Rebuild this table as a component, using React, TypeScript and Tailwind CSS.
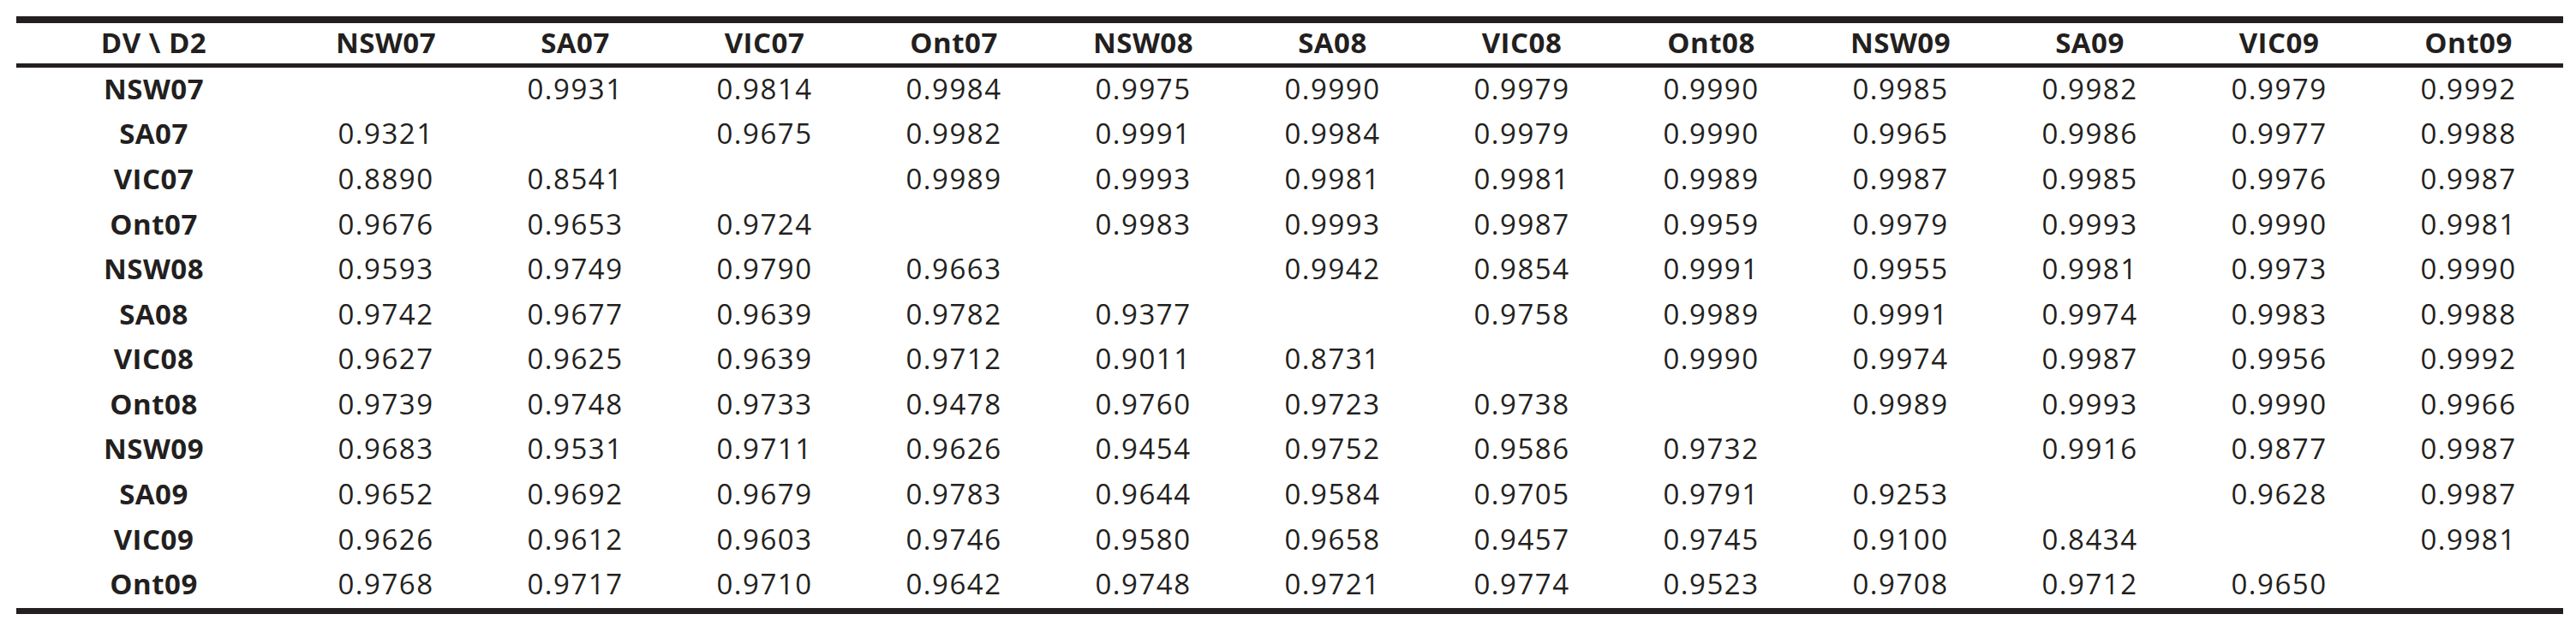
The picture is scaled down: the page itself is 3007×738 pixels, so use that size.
import React from "react";

const cols = ["NSW07","SA07","VIC07","Ont07","NSW08","SA08","VIC08","Ont08","NSW09","SA09","VIC09","Ont09"];

const data: string[][] = [
  ["", "0.9931", "0.9814", "0.9984", "0.9975", "0.9990", "0.9979", "0.9990", "0.9985", "0.9982", "0.9979", "0.9992"],
  ["0.9321", "", "0.9675", "0.9982", "0.9991", "0.9984", "0.9979", "0.9990", "0.9965", "0.9986", "0.9977", "0.9988"],
  ["0.8890", "0.8541", "", "0.9989", "0.9993", "0.9981", "0.9981", "0.9989", "0.9987", "0.9985", "0.9976", "0.9987"],
  ["0.9676", "0.9653", "0.9724", "", "0.9983", "0.9993", "0.9987", "0.9959", "0.9979", "0.9993", "0.9990", "0.9981"],
  ["0.9593", "0.9749", "0.9790", "0.9663", "", "0.9942", "0.9854", "0.9991", "0.9955", "0.9981", "0.9973", "0.9990"],
  ["0.9742", "0.9677", "0.9639", "0.9782", "0.9377", "", "0.9758", "0.9989", "0.9991", "0.9974", "0.9983", "0.9988"],
  ["0.9627", "0.9625", "0.9639", "0.9712", "0.9011", "0.8731", "", "0.9990", "0.9974", "0.9987", "0.9956", "0.9992"],
  ["0.9739", "0.9748", "0.9733", "0.9478", "0.9760", "0.9723", "0.9738", "", "0.9989", "0.9993", "0.9990", "0.9966"],
  ["0.9683", "0.9531", "0.9711", "0.9626", "0.9454", "0.9752", "0.9586", "0.9732", "", "0.9916", "0.9877", "0.9987"],
  ["0.9652", "0.9692", "0.9679", "0.9783", "0.9644", "0.9584", "0.9705", "0.9791", "0.9253", "", "0.9628", "0.9987"],
  ["0.9626", "0.9612", "0.9603", "0.9746", "0.9580", "0.9658", "0.9457", "0.9745", "0.9100", "0.8434", "", "0.9981"],
  ["0.9768", "0.9717", "0.9710", "0.9642", "0.9748", "0.9721", "0.9774", "0.9523", "0.9708", "0.9712", "0.9650", ""],
];

export default function App() {
  return (
    <div className="w-[3007px] h-[738px] bg-white pt-[19px] pl-[19px] font-['Open_Sans',sans-serif] text-[#231f20]">
      <div className="w-[2973px]">
        <div className="h-[8px] bg-[#231f20]" />
        <div className="grid grid-cols-[321px_repeat(12,221px)] h-[47px]">
          <div className="flex items-center justify-center font-bold text-[33px] leading-none tracking-[0.5px] pb-[2px] whitespace-pre">DV \ D2</div>
          {cols.map((c) => (
            <div key={c} className="flex items-center justify-center font-bold text-[33px] leading-none tracking-[0.5px] pb-[2px]">
              {c}
            </div>
          ))}
        </div>
        <div className="h-[5px] bg-[#231f20]" />
        {data.map((row, i) => (
          <div key={i} className="grid grid-cols-[321px_repeat(12,221px)] h-[52.58px]">
            <div className="flex items-center justify-center font-bold text-[33px] leading-none tracking-[0.5px] pb-[4px]">
              {cols[i]}
            </div>
            {row.map((v, j) => (
              <div key={j} className="flex items-center justify-center text-[33px] leading-none tracking-[1.5px] pb-[4px]">
                {v}
              </div>
            ))}
          </div>
        ))}
        <div className="h-[7px] bg-[#231f20]" />
      </div>
    </div>
  );
}
